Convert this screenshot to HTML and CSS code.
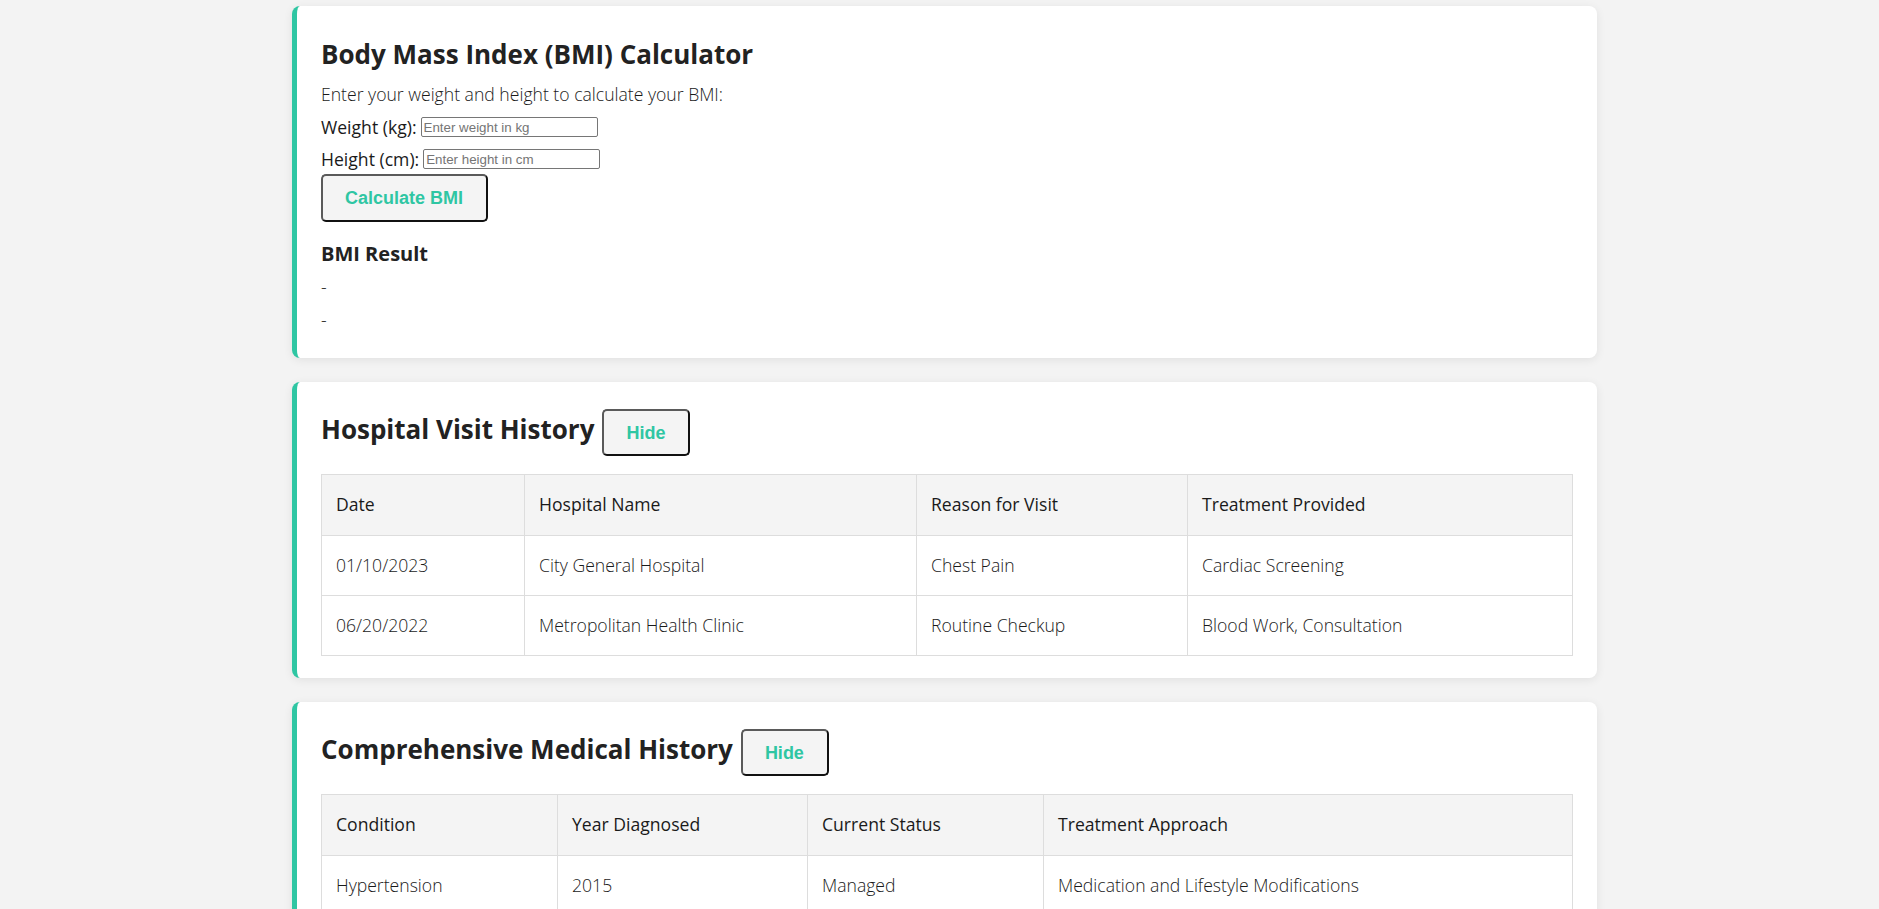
FILE: index.html
```html
<!DOCTYPE html>
<html lang="en">
<head>
<meta charset="utf-8">
<title>Health Records</title>
<link rel="stylesheet" href="styles.css">
</head>
<body>
<div class="container">
  <section class="card bmi">
    <h2 class="card-title">Body Mass Index (BMI) Calculator</h2>
    <p class="intro">Enter your weight and height to calculate your BMI:</p>
    <div class="form-row">
      <label for="weight">Weight (kg):</label>
      <input id="weight" type="text" placeholder="Enter weight in kg">
    </div>
    <div class="form-row">
      <label for="height">Height (cm):</label>
      <input id="height" type="text" placeholder="Enter height in cm">
    </div>
    <button class="btn btn-calc">Calculate BMI</button>
    <h3 class="result-title">BMI Result</h3>
    <p class="result-line">-</p>
    <p class="result-line">-</p>
  </section>

  <section class="card">
    <div class="section-header">
      <h2 class="card-title">Hospital Visit History</h2>
      <button class="btn">Hide</button>
    </div>
    <table class="data-table visits">
      <colgroup>
        <col class="v1"><col class="v2"><col class="v3"><col class="v4">
      </colgroup>
      <thead>
        <tr><th>Date</th><th>Hospital Name</th><th>Reason for Visit</th><th>Treatment Provided</th></tr>
      </thead>
      <tbody>
        <tr><td>01/10/2023</td><td>City General Hospital</td><td>Chest Pain</td><td>Cardiac Screening</td></tr>
        <tr><td>06/20/2022</td><td>Metropolitan Health Clinic</td><td>Routine Checkup</td><td>Blood Work, Consultation</td></tr>
      </tbody>
    </table>
  </section>

  <section class="card">
    <div class="section-header">
      <h2 class="card-title">Comprehensive Medical History</h2>
      <button class="btn">Hide</button>
    </div>
    <table class="data-table history">
      <colgroup>
        <col class="h1"><col class="h2"><col class="h3"><col class="h4">
      </colgroup>
      <thead>
        <tr><th>Condition</th><th>Year Diagnosed</th><th>Current Status</th><th>Treatment Approach</th></tr>
      </thead>
      <tbody>
        <tr><td>Hypertension</td><td>2015</td><td>Managed</td><td>Medication and Lifestyle Modifications</td></tr>
      </tbody>
    </table>
  </section>
</div>
</body>
</html>
```

FILE: styles.css
```css
* { box-sizing: border-box; }

html, body {
  margin: 0;
  background: #f3f3f3;
}

body {
  padding: 6px 0 0 10px;
  font-family: "Open Sans", Lato, sans-serif;
  font-weight: 300;
  font-size: 17.6px;
  line-height: 24px;
  color: #1a1a1a;
  overflow: hidden;
}

.container {
  width: 1305px;
  margin: 0 auto;
  display: flex;
  flex-direction: column;
  gap: 24px;
}

.card {
  background: #fff;
  border-left: 5px solid #2fc6a3;
  border-radius: 8px;
  padding: 24px 24px 22px;
  box-shadow: 0 2px 10px rgba(0, 0, 0, 0.08);
}

.card-title {
  margin: 0;
  font-size: 26px;
  line-height: 32px;
  font-weight: 700;
  color: #222;
}

.bmi .card-title {
  margin-top: 8px;
  margin-bottom: 12px;
}

.intro {
  margin: 0 0 9px;
}

.form-row {
  display: flex;
  align-items: center;
  gap: 4px;
  height: 24px;
  margin-bottom: 8px;
}

.form-row label {
  color: #1a1a1a;
  font-weight: 400;
}

.form-row input {
  width: 177px;
  height: 20px;
  padding: 1px 2px;
  border: 1px solid #767676;
  border-radius: 2px;
  font-family: "Liberation Sans", Arial, sans-serif;
  font-size: 13.33px;
  color: #222;
  background: #fff;
}

.form-row input::placeholder {
  color: #757575;
}

.btn {
  display: inline-block;
  padding: 12px 23px 11px 22px;
  background: #f4f4f4;
  border: 2px solid;
  border-color: #5a5a5a #111 #111 #5a5a5a;
  border-radius: 5px;
  font-family: "Liberation Sans", Arial, sans-serif;
  font-weight: 700;
  font-size: 18px;
  line-height: 20px;
  color: #2fc6a3;
  cursor: pointer;
}

.btn-calc {
  margin-top: -5px;
  padding-bottom: 12px;
}

.result-title {
  margin: 19px 0 8px;
  font-size: 20px;
  line-height: 26px;
  font-weight: 700;
  color: #222;
}

.result-line {
  margin: 0 0 9px;
}

.result-line:last-child {
  margin-bottom: 4px;
}

.section-header {
  display: flex;
  align-items: baseline;
  gap: 8px;
  margin-top: 3px;
  margin-bottom: 18px;
}

.data-table {
  width: 100%;
  border-collapse: collapse;
  table-layout: fixed;
}

.data-table th,
.data-table td {
  border: 1px solid #ddd;
  padding: 18px 14px;
  line-height: 23px;
  text-align: left;
  color: #1a1a1a;
}

.data-table th {
  background: #f4f4f4;
  font-weight: 500;
  padding-bottom: 19px;
}

.data-table td {
  font-weight: 300;
}

.visits .v1 { width: 203px; }
.visits .v2 { width: 392px; }
.visits .v3 { width: 271px; }
.visits .v4 { width: auto; }

.history .h1 { width: 236px; }
.history .h2 { width: 250px; }
.history .h3 { width: 236px; }
.history .h4 { width: auto; }
```
